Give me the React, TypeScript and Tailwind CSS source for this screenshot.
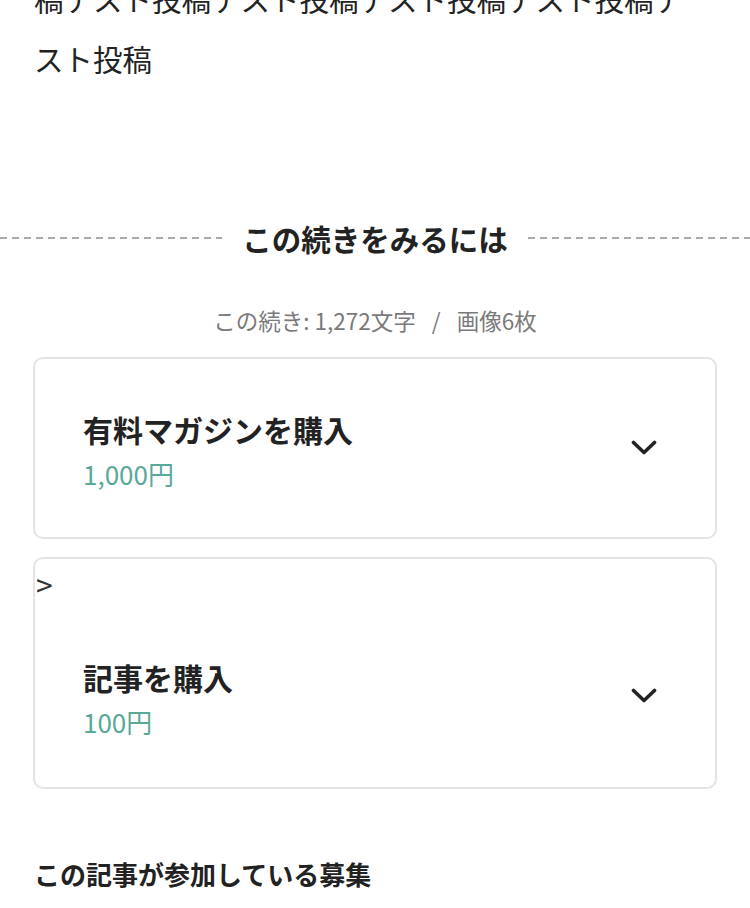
import React from "react";

const Chevron = () => (
  <svg width="26" height="16" viewBox="0 0 26 16" className="mb-[8px]">
    <path d="M2.5 2.5 L13 12.5 L23.5 2.5" fill="none" stroke="#222" strokeWidth="3.6" strokeLinecap="round" strokeLinejoin="round" />
  </svg>
);

function Card({ title, price, extra }: { title: string; price: string; extra?: boolean }) {
  return (
    <div className={`rounded-[10px] border-2 border-[#e4e4e4] bg-white ${extra ? "pt-[9px] pb-[42px]" : "pt-[48px] pb-[40px]"}`}>
      {extra && (
        <div className="pl-[1px] text-[30px] leading-[32px] text-[#333]">&gt;</div>
      )}
      <div className={`flex items-center pl-[48px] pr-[58px] ${extra ? "mt-[55px]" : ""}`}>
        <div className="flex-1">
          <div className="text-[30px] font-bold leading-[44px] text-[#222]">{title}</div>
          <div className="text-[26px] leading-[46px] text-[#5aa898]">{price}</div>
        </div>
        <Chevron />
      </div>
    </div>
  );
}

export default function App() {
  return (
    <div
      className="min-h-[908px] w-[750px] overflow-hidden bg-white"
      style={{ fontFamily: '"Noto Sans CJK JP", "Noto Sans", sans-serif' }}
    >
      <div className="-mt-[32px] px-[34px] text-[29.5px] leading-[60px] text-[#222]">
        <p className="whitespace-nowrap">稿テスト投稿テスト投稿テスト投稿テスト投稿テ</p>
        <p>スト投稿</p>
      </div>

      <div className="mt-[130px] flex items-center">
        <div className="h-[2px] flex-1 bg-[repeating-linear-gradient(to_right,#aaaaaa_0_7px,transparent_7px_12px)]" />
        <div className="px-[20px] text-[29.5px] font-bold leading-[40px] text-[#222]">この続きをみるには</div>
        <div className="h-[2px] flex-1 bg-[repeating-linear-gradient(to_right,#aaaaaa_0_7px,transparent_7px_12px)]" />
      </div>

      <div className="mt-[46px] flex justify-center text-[22.5px] leading-[32px] text-[#7a7a7a]">
        <span>この続き: 1,272文字</span>
        <span className="px-[16px]">/</span>
        <span>画像6枚</span>
      </div>

      <div className="mt-[21px] flex flex-col gap-[18px] px-[33px]">
        <Card title="有料マガジンを購入" price="1,000円" />
        <Card title="記事を購入" price="100円" extra />
      </div>

      <div className="mt-[67px] px-[34px] text-[26px] font-bold leading-[36px] text-[#222]">
        この記事が参加している募集
      </div>
    </div>
  );
}
